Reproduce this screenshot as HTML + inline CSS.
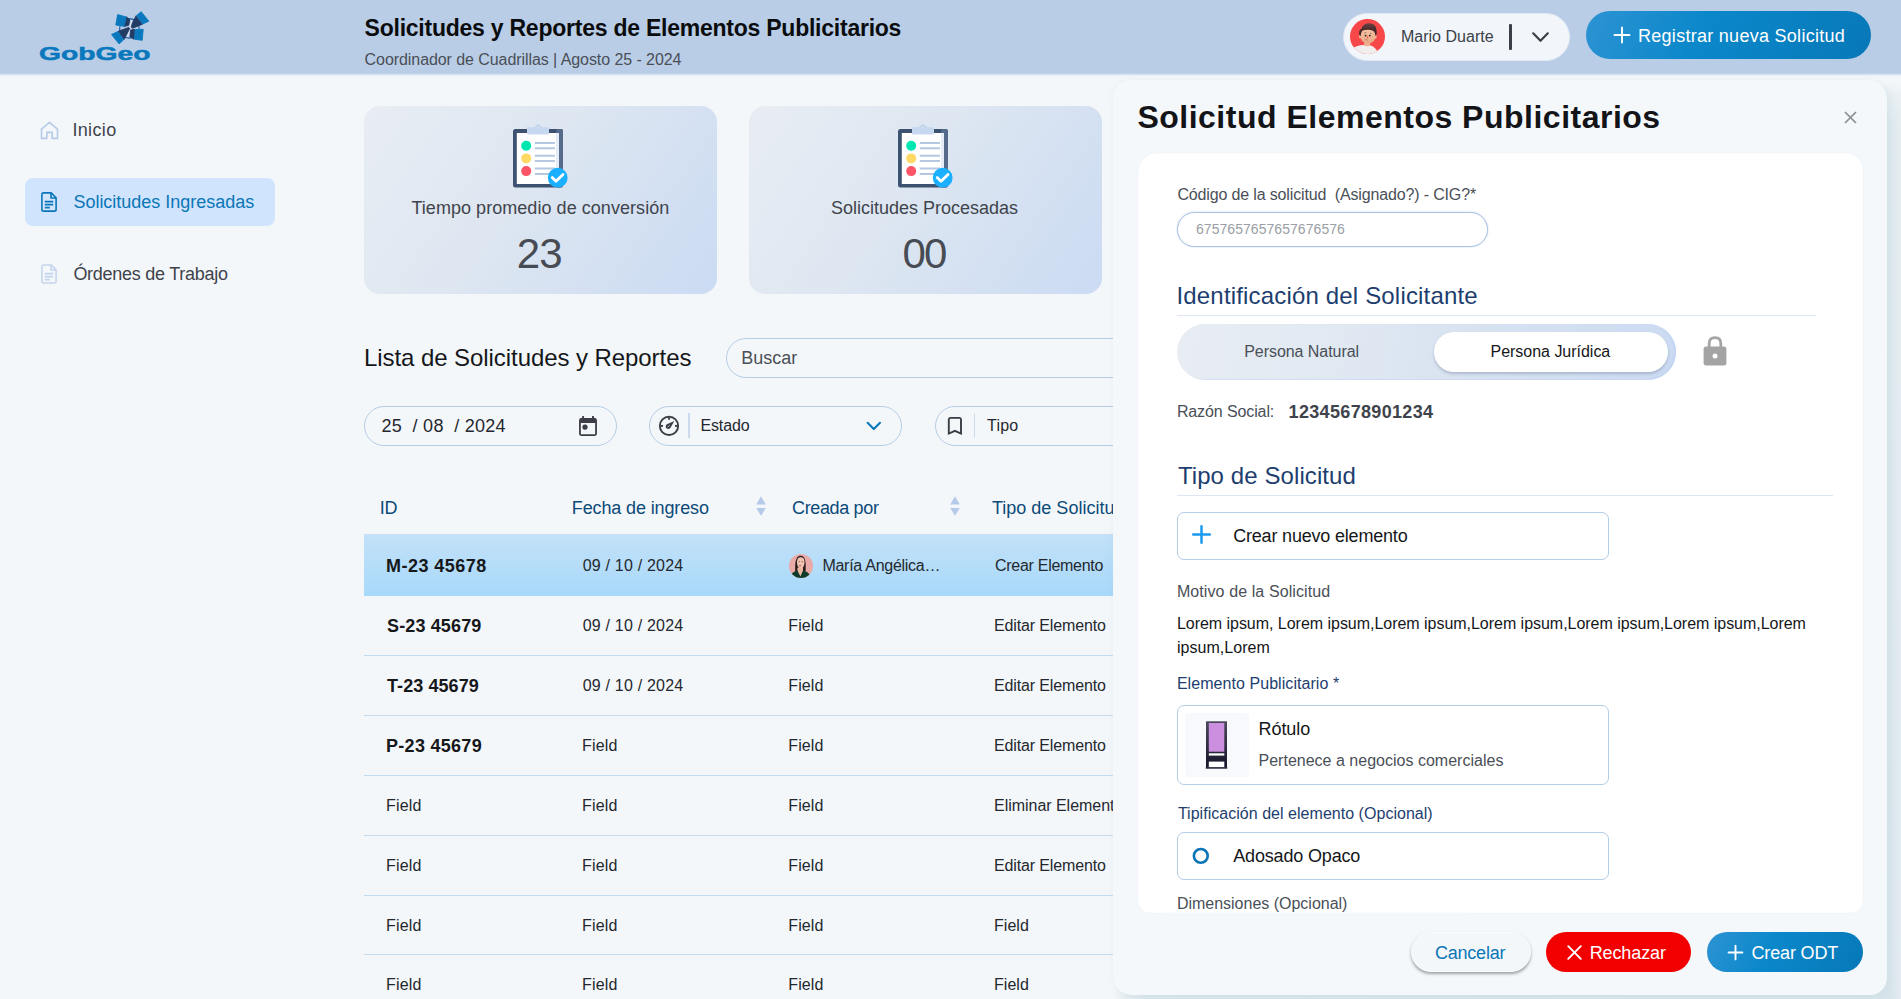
<!DOCTYPE html>
<html lang="es">
<head>
<meta charset="utf-8">
<title>Solicitudes y Reportes de Elementos Publicitarios</title>
<style>
*{box-sizing:border-box;margin:0;padding:0}
html,body{width:1901px;height:999px;overflow:hidden}
body{background:#f4f7fa;font-family:"Liberation Sans",sans-serif;color:#1f2328;position:relative}
.abs{position:absolute;white-space:nowrap}
svg{position:absolute;overflow:visible}
/* header */
#hdr{left:0;top:0;width:1901px;height:76px;background:linear-gradient(180deg,#b9cde6 0,#b9cde6 73.2px,#d9e4f0 74.6px,#f4f7fa 76px)}
#title{left:365px;top:14px;font-size:23px;font-weight:700;color:#0b0c0e;line-height:28px}
#sub{left:365px;top:50.8px;font-size:16px;color:#4a4f57;line-height:18px}
#user{left:1342.5px;top:12.5px;width:227px;height:48px;border-radius:24px;background:#f2f6fa;border:1.5px solid #dfe8f4}
#uavatar{left:1349.9px;top:18.9px;width:35.5px;height:35.5px;border-radius:50%;background:#f84748;overflow:hidden}
#uname{left:1401.5px;top:26.8px;font-size:16px;color:#3b4048;line-height:20px}
#usep{left:1509.2px;top:24px;width:2.4px;height:25.5px;background:#3b4048;border-radius:1px}
#reg{left:1586px;top:11px;width:284.5px;height:47.5px;border-radius:24px;background:linear-gradient(115deg,#2d93d3 0%,#0b88ca 40%,#0778b8 100%)}
#regt{left:1638px;top:24.5px;font-size:18px;color:#fff;line-height:22px}
/* sidebar */
.nav{font-size:18px;color:#3e434b;line-height:22px}
#navact{left:25px;top:178px;width:250px;height:47.5px;border-radius:8px;background:#d0e5fd}
/* cards */
.card{width:353px;height:188px;border-radius:16px;background:linear-gradient(125deg,#e8edf3 0%,#dde6f1 45%,#cbdbf3 100%)}
.clab{font-size:18px;color:#3f444c;line-height:22px}
.cnum{font-size:42px;color:#474c54;line-height:44px;margin-top:-0.3px}
/* list */
#ltitle{left:364px;top:344px;font-size:24px;color:#15171a;line-height:28px}
.pill{height:40px;border-radius:20px;border:1px solid #b5cde6;background:#f4f7fa}
.ptxt{font-size:16px;color:#24282e;line-height:20px}
.vdiv{width:1.8px;height:25px;background:#cddaee;top:413.2px}
.th{font-size:18px;color:#0b4a78;line-height:22px;top:497px}
.row{left:364px;width:749px;height:60px;border-bottom:1px solid #c5dcef;overflow:hidden}
.c1,.c2,.c3,.c4{position:absolute;white-space:nowrap;font-size:16px;color:#24282e;line-height:20px;top:20px}
.c1{left:23px}.c2{left:219px}.c3{left:425px}.c4{left:631px}
.b{font-weight:700;font-size:18px;color:#16181b;top:19.8px}
/* panel */
#pright{left:1876px;top:82px;width:25px;height:917px;background:linear-gradient(90deg,rgba(244,247,250,0) 0,rgba(244,247,250,0) 50%,rgba(244,247,250,.4) 100%),linear-gradient(180deg,#f4f7fa 0,#e6eef2 12px,#dbe7ec 40px,#d7e4ea 100%)}
#pbot{left:1113px;top:980px;width:764px;height:19px;background:linear-gradient(90deg,#f4f7fa 0,#e3ecf1 14px,#d9e5eb 34px,#d7e4ea 100%)}
#panel{left:1113px;top:80px;width:774px;height:914.5px;border-radius:19px 19px 17px 19px;background:#f5f8fb;box-shadow:0 0 9px rgba(120,170,190,.11)}
#ptitle{left:1138px;top:98.1px;font-size:32px;font-weight:700;color:#131418;line-height:38px}
#inner{left:1137.8px;top:153.3px;width:725px;height:760px;border-radius:19px 17px 12px 12px;background:#fff;box-shadow:inset 0 0 2px 0 #f0f3f6,0 0 2px 0 rgba(238,241,245,.9)}
.lab{font-size:16px;color:#4a4f57;line-height:20px}
.labb{font-size:16px;color:#1d3e6e;line-height:20px}
.sec{font-size:24px;color:#1d3e6e;line-height:28px}
.hr{height:1px;background:#e0e7f4}
.box{border:1px solid #b5cde6;border-radius:7px;background:#fff;left:1177px;width:431.5px}
.btxt{font-size:18px;color:#15171a;line-height:22px}
.btn{height:39.5px;border-radius:20px;top:932px}
.btnt{font-size:18px;color:#fff;line-height:22px;top:941.5px}
/*FIT*/
#title{left:364.6px !important;letter-spacing:-0.24px}
#sub{left:364.6px !important;letter-spacing:-0.07px}
#uname{left:1400.9px !important;letter-spacing:0.03px}
#regt{left:1638.0px !important;letter-spacing:0.28px}
#nav1{left:72.4px !important;letter-spacing:0.36px}
#nav2{left:73.4px !important;letter-spacing:-0.01px}
#nav3{left:73.4px !important;letter-spacing:-0.27px}
#cl1{left:411.4px !important;letter-spacing:0.05px}
#cn1{left:516.8px !important;letter-spacing:-0.86px}
#cl2{left:831.0px !important;letter-spacing:-0.00px}
#cn2{left:902.4px !important;letter-spacing:-1.76px}
#ltitle{left:364.0px !important;letter-spacing:-0.07px}
#searcht{left:741.3px !important;letter-spacing:-0.03px}
#datet{left:381.6px !important;letter-spacing:0.25px}
#estadot{left:700.4px !important;letter-spacing:-0.10px}
#tipot{left:987.0px !important;letter-spacing:0.22px}
#th1{left:379.7px !important;letter-spacing:-0.30px}
#th2{left:571.8px !important;letter-spacing:-0.13px}
#th3{left:792.0px !important;letter-spacing:-0.35px}
#ptitle{left:1137.4px !important;letter-spacing:0.50px}
#p1{left:1177.4px !important;letter-spacing:-0.15px}
#p2{left:1196.0px !important;letter-spacing:0.05px}
#p3{left:1176.5px !important;letter-spacing:0.17px}
#p4{left:1244.2px !important;letter-spacing:-0.05px}
#p5{left:1490.5px !important;letter-spacing:-0.02px}
#p6{left:1176.9px !important;letter-spacing:-0.11px}
#p7{left:1288.6px !important;letter-spacing:0.33px}
#p8{left:1177.9px !important;letter-spacing:0.09px}
#p9{left:1233.2px !important;letter-spacing:-0.19px}
#p10{left:1176.9px !important;letter-spacing:0.10px}
#p11{left:1176.9px !important;letter-spacing:-0.03px}
#p12{left:1176.9px !important;letter-spacing:0.04px}
#p13{left:1176.9px !important;letter-spacing:0.06px}
#p14{left:1258.5px !important;letter-spacing:-0.06px}
#p15{left:1258.5px !important;letter-spacing:0.01px}
#p16{left:1177.9px !important;letter-spacing:0.03px}
#p17{left:1233.2px !important;letter-spacing:-0.16px}
#p18{left:1176.9px !important;letter-spacing:-0.01px}
#bc{left:1435.0px !important;letter-spacing:-0.23px}
#br{left:1589.7px !important;letter-spacing:-0.11px}
#bo{left:1751.5px !important;letter-spacing:-0.15px}
#r1c1{left:22.0px !important;letter-spacing:0.47px}
#r1c2{left:218.7px !important;letter-spacing:0.20px}
#r1c3{left:458.4px !important;letter-spacing:-0.27px}
#r1c4{left:631.0px !important;letter-spacing:-0.28px}
#r2c1{left:23.0px !important;letter-spacing:0.14px}
#r2c2{left:218.7px !important;letter-spacing:0.20px}
#r2c3{left:424.3px !important;letter-spacing:0.10px}
#r2c4{left:630.0px !important;letter-spacing:-0.14px}
#r3c1{left:23.0px !important;letter-spacing:0.08px}
#r3c2{left:218.7px !important;letter-spacing:0.20px}
#r3c3{left:424.3px !important;letter-spacing:0.10px}
#r3c4{left:630.0px !important;letter-spacing:-0.14px}
#r4c1{left:22.0px !important;letter-spacing:0.29px}
#r4c2{left:218.1px !important;letter-spacing:0.13px}
#r4c3{left:424.3px !important;letter-spacing:0.10px}
#r4c4{left:630.0px !important;letter-spacing:-0.14px}
#r5c1{left:22.0px !important;letter-spacing:0.20px}
#r5c2{left:218.1px !important;letter-spacing:0.13px}
#r5c3{left:424.3px !important;letter-spacing:0.10px}
#r5c4{left:630.0px !important;letter-spacing:-0.03px}
#r6c1{left:22.0px !important;letter-spacing:0.20px}
#r6c2{left:218.1px !important;letter-spacing:0.13px}
#r6c3{left:424.3px !important;letter-spacing:0.10px}
#r6c4{left:630.0px !important;letter-spacing:-0.14px}
#r7c1{left:22.0px !important;letter-spacing:0.20px}
#r7c2{left:218.1px !important;letter-spacing:0.13px}
#r7c3{left:424.3px !important;letter-spacing:0.10px}
#r7c4{left:630.0px !important;letter-spacing:0.03px}
#r8c1{left:22.0px !important;letter-spacing:0.20px}
#r8c2{left:218.1px !important;letter-spacing:0.13px}
#r8c3{left:424.3px !important;letter-spacing:0.10px}
#r8c4{left:630.0px !important;letter-spacing:0.03px}
/*ENDFIT*/
</style>
</head>
<body>
<!-- HEADER -->
<div id="hdr" class="abs"></div>
<svg id="logo" style="left:0;top:0" width="200" height="74" viewBox="0 0 200 74">
  <circle cx="129.4" cy="28.4" r="9.8" fill="none" stroke="#1b5dab" stroke-width="1.15"/>
  <polygon points="131.3,20.4 132.5,21.2 128.1,36.9 126.8,36.4" fill="#e3ebf5"/>
  <g stroke-linejoin="round" stroke-width=".9">
  <polygon points="126.3,16.8 129.8,19.5 128.7,25.3 124.2,26.5" fill="#223c66" stroke="#223c66"/>
  <polygon points="136.1,15.8 142.6,24.2 132.5,28.3 131.2,26.7 132.6,22.4" fill="#223c66" stroke="#223c66"/>
  <polygon points="118.1,31.3 128.8,27.4 129.7,28.6 124.1,39.5" fill="#223c66" stroke="#223c66"/>
  <polygon points="130.7,30 135,29.4 133.9,39.2 129.9,36.7" fill="#223c66" stroke="#223c66"/>
  <polygon points="117.6,14.6 126.1,16.9 124,26.3 115.8,25" fill="#0a78bd" stroke="#0a78bd"/>
  <polygon points="141.2,11.7 148.8,21.2 142.8,23.9 136.5,15.6" fill="#0a78bd" stroke="#0a78bd"/>
  <polygon points="111.5,34.5 117.8,31.6 123.6,39.8 119.1,43.9" fill="#0a78bd" stroke="#0a78bd"/>
  <polygon points="135.4,29.5 143.2,29.3 142.2,40.3 134.4,39.2" fill="#0a78bd" stroke="#0a78bd"/>
  </g>
  <text x="39" y="60.4" font-family="Liberation Sans, sans-serif" font-weight="700" font-size="19" fill="#0a78bd" stroke="#0a78bd" stroke-width="0.5" textLength="111.5" lengthAdjust="spacingAndGlyphs">GobGeo</text>
</svg>
<div id="title" class="abs">Solicitudes y Reportes de Elementos Publicitarios</div>
<div id="sub" class="abs">Coordinador de Cuadrillas | Agosto 25 - 2024</div>
<div id="user" class="abs"></div>
<div id="uavatar" class="abs">
  <svg style="left:0;top:0" width="36" height="36" viewBox="0 0 36 36">
    <defs><linearGradient id="hg" x1="0" y1="0" x2="0" y2="1"><stop offset="0" stop-color="#6b4242"/><stop offset=".5" stop-color="#4a2a2b"/><stop offset="1" stop-color="#3c2022"/></linearGradient>
    <linearGradient id="sk" x1="0" y1="0" x2="0" y2="1"><stop offset="0" stop-color="#f6c4a4"/><stop offset="1" stop-color="#e8a585"/></linearGradient></defs>
    <path d="M2.5 29.5 C5 27.2 9.5 26.2 14 26 L20.6 26.4 C24 27.4 26.6 30.2 28 33.6 L24 38 H6 Z" fill="#f1eeed"/>
    <path d="M14.2 22 H20.2 V26.6 Q17.2 28.2 14.2 26.4 Z" fill="#eeb091"/>
    <ellipse cx="10.3" cy="17.6" rx="1.3" ry="1.9" fill="#efb494"/><ellipse cx="25.4" cy="17.8" rx="1.3" ry="1.9" fill="#efb494"/>
    <path d="M10.6 12 Q10.4 10.4 17.8 10.2 Q25.6 10.4 25.4 13 V18 Q25 22.6 21 24 Q17.6 25 14.2 23.6 Q10.8 21.8 10.6 17.6 Z" fill="url(#sk)"/>
    <path d="M9.4 16.2 C8.6 12.8 9.6 10.4 11.6 9.6 C12.4 6 16 4 19.6 4.2 C24 4.4 26.8 7.6 26.4 11 C27.2 13.2 26.8 15.4 25.6 17 C25.2 15 24.8 13.2 23.4 12 C20.4 10.6 15.4 10.4 12.4 11.8 C11.2 13 11 14.8 10.6 17 Z" fill="url(#hg)"/>
    <circle cx="15.6" cy="16.6" r=".9" fill="#2a1b1b"/><circle cx="19.8" cy="16.6" r=".9" fill="#2a1b1b"/>
    <path d="M14.4 13.9 l1.8 -.3 M19.9 14 l1.6 .6" stroke="#5a3a38" stroke-width=".6" fill="none"/>
    <path d="M17.3 16.2 L18.3 19 L16.9 19.2 Z" fill="#f25046"/>
    <path d="M15.3 19.8 q.8 1.3 2.1 1.2" stroke="#7a4438" stroke-width=".55" fill="none"/>
  </svg>
</div>
<div id="uname" class="abs">Mario Duarte</div>
<div id="usep" class="abs"></div>
<svg style="left:1532px;top:32px" width="17" height="11" viewBox="0 0 17 11"><path d="M1.2 1.3 L8.5 8.8 L15.8 1.3" fill="none" stroke="#3b4048" stroke-width="2.2" stroke-linecap="round" stroke-linejoin="round"/></svg>
<div id="reg" class="abs"></div>
<svg style="left:1614.2px;top:27px" width="16" height="16" viewBox="0 0 16 16"><path d="M8 0.5V15.5M0.5 8H15.5" stroke="#fff" stroke-width="1.9" stroke-linecap="round"/></svg>
<div id="regt" class="abs">Registrar nueva Solicitud</div>

<!-- SIDEBAR -->
<div id="navact" class="abs"></div>
<svg style="left:40px;top:120.5px" width="19" height="19" viewBox="0 0 19 19"><path d="M1.5 8.2 L9.5 1.4 L17.5 8.2 V17.4 H12.2 V11.4 H6.8 V17.4 H1.5 Z" fill="none" stroke="#b3cae8" stroke-width="1.6" stroke-linejoin="round"/></svg>
<svg style="left:41px;top:192px" width="16" height="20" viewBox="0 0 16 20"><path d="M2.6 0.9 H10.2 L15.1 5.8 V17.4 Q15.1 19.1 13.4 19.1 H2.6 Q0.9 19.1 0.9 17.4 V2.6 Q0.9 0.9 2.6 0.9 Z M10 1.2 V6 H14.8" fill="none" stroke="#0a76b7" stroke-width="1.6" stroke-linejoin="round"/><path d="M3.8 9.6 H12.2 M3.8 12.6 H12.2 M3.8 15.6 H8.8" stroke="#0a76b7" stroke-width="1.8"/></svg>
<svg style="left:41px;top:264px" width="16" height="20" viewBox="0 0 16 20"><path d="M2.6 0.9 H10.2 L15.1 5.8 V17.4 Q15.1 19.1 13.4 19.1 H2.6 Q0.9 19.1 0.9 17.4 V2.6 Q0.9 0.9 2.6 0.9 Z M10 1.2 V6 H14.8" fill="none" stroke="#c3d4ec" stroke-width="1.5" stroke-linejoin="round"/><path d="M3.8 9.6 H12.2 M3.8 12.6 H12.2 M3.8 15.6 H8.8" stroke="#c3d4ec" stroke-width="1.8"/></svg>
<div id="nav1" class="abs nav" style="left:73px;top:119px">Inicio</div>
<div id="nav2" class="abs nav" style="left:73px;top:191px;color:#0a76b7">Solicitudes Ingresadas</div>
<div id="nav3" class="abs nav" style="left:73px;top:263px">Órdenes de Trabajo</div>

<!-- CARDS -->
<div id="card1" class="abs card" style="left:364px;top:106px"></div>
<div id="card2" class="abs card" style="left:749px;top:106px"></div>
<svg style="left:513px;top:124px" width="62" height="66" viewBox="0 0 62 66"><g>
  <rect x="0" y="5" width="50" height="58.5" rx="2.5" fill="#3d5170"/>
  <rect x="43" y="5" width="7" height="58.5" rx="2" fill="#566a8a"/>
  <rect x="3.8" y="9" width="42.2" height="51" fill="#ffffff"/>
  <rect x="43" y="9" width="3" height="51" fill="#e6edf8"/>
  <path d="M14 3.2 H20.5 L24.3 0 H25.7 L29.5 3.2 H36 V9.2 Q36 10.6 34.6 10.6 H15.4 Q14 10.6 14 9.2 Z" fill="#c5d8f0"/>
  <circle cx="25" cy="4" r="1.3" fill="#f4f7fb" stroke="#a9bedb" stroke-width=".5"/>
  <circle cx="13.2" cy="21.8" r="5" fill="#00e6b0"/>
  <circle cx="13.2" cy="34.4" r="5" fill="#ffd966"/>
  <circle cx="13.2" cy="47.1" r="5" fill="#ff5566"/>
  <path d="M21.8 18.9 H42 M21.8 24.3 H42 M21.8 31.7 H42 M21.8 37.1 H42 M21.8 44.6 H42 M21.8 50 H42" stroke="#b5c8e3" stroke-width="2"/>
  <circle cx="44.7" cy="53.7" r="9.9" fill="#1ab0ff"/>
  <path d="M39.2 53.6 L43 57.2 L50 50.4" fill="none" stroke="#fff" stroke-width="2.8" stroke-linecap="round" stroke-linejoin="round"/>
</g></svg>
<svg style="left:898px;top:124px" width="62" height="66" viewBox="0 0 62 66"><g>
  <rect x="0" y="5" width="50" height="58.5" rx="2.5" fill="#3d5170"/>
  <rect x="43" y="5" width="7" height="58.5" rx="2" fill="#566a8a"/>
  <rect x="3.8" y="9" width="42.2" height="51" fill="#ffffff"/>
  <rect x="43" y="9" width="3" height="51" fill="#e6edf8"/>
  <path d="M14 3.2 H20.5 L24.3 0 H25.7 L29.5 3.2 H36 V9.2 Q36 10.6 34.6 10.6 H15.4 Q14 10.6 14 9.2 Z" fill="#c5d8f0"/>
  <circle cx="25" cy="4" r="1.3" fill="#f4f7fb" stroke="#a9bedb" stroke-width=".5"/>
  <circle cx="13.2" cy="21.8" r="5" fill="#00e6b0"/>
  <circle cx="13.2" cy="34.4" r="5" fill="#ffd966"/>
  <circle cx="13.2" cy="47.1" r="5" fill="#ff5566"/>
  <path d="M21.8 18.9 H42 M21.8 24.3 H42 M21.8 31.7 H42 M21.8 37.1 H42 M21.8 44.6 H42 M21.8 50 H42" stroke="#b5c8e3" stroke-width="2"/>
  <circle cx="44.7" cy="53.7" r="9.9" fill="#1ab0ff"/>
  <path d="M39.2 53.6 L43 57.2 L50 50.4" fill="none" stroke="#fff" stroke-width="2.8" stroke-linecap="round" stroke-linejoin="round"/>
</g></svg>
<div id="cl1" class="abs clab" style="left:411.5px;top:197px">Tiempo promedio de conversión</div>
<div id="cn1" class="abs cnum" style="left:518px;top:232px">23</div>
<div id="cl2" class="abs clab" style="left:831px;top:197px">Solicitudes Procesadas</div>
<div id="cn2" class="abs cnum" style="left:902px;top:232px">00</div>

<!-- LIST -->
<div id="ltitle" class="abs">Lista de Solicitudes y Reportes</div>
<div id="search" class="abs pill" style="left:726px;top:338px;width:420px"></div>
<div id="searcht" class="abs ptxt" style="left:742px;top:348px;color:#4a4f57;font-size:18px">Buscar</div>
<div id="date" class="abs pill" style="left:364px;top:406px;width:253px"></div>
<div id="datet" class="abs ptxt" style="left:381.5px;top:416px;font-size:18px">25&nbsp; / 08&nbsp; / 2024</div>
<svg style="left:579px;top:415.8px" width="18" height="20.2" viewBox="0 0 18 20.2"><path d="M2.2 2.05 H15.8 Q17.95 2.05 17.95 4.2 V17.85 Q17.95 20 15.8 20 H2.2 Q0.05 20 0.05 17.85 V4.2 Q0.05 2.05 2.2 2.05 Z M1.85 7 V18.2 H16.15 V7 Z" fill="#3c3d47" fill-rule="evenodd"/><rect x="3.1" y="0.1" width="1.95" height="3" fill="#3c3d47"/><rect x="13" y="0.1" width="2.05" height="3" fill="#3c3d47"/><rect x="3.4" y="8.5" width="5.2" height="5.2" rx="2.3" fill="#3c3d47"/></svg>
<div id="estado" class="abs pill" style="left:649px;top:406px;width:253px"></div>
<svg style="left:658px;top:415px" width="22" height="22" viewBox="0 0 22 22"><circle cx="11" cy="10.9" r="9.15" fill="none" stroke="#3a3d45" stroke-width="1.9"/><rect x="10.05" y="2.8" width="1.9" height="1.9" fill="#3a3d45"/><rect x="2.8" y="9.95" width="2.2" height="1.9" fill="#3a3d45"/><rect x="17" y="9.95" width="2.2" height="1.9" fill="#3a3d45"/><path d="M16.3 5.9 L12.55 12.8 A2.6 2.6 0 1 1 8.9 9.3 Z" fill="#3a3d45"/><path d="M10 11.9 L11.3 10.5" stroke="#eef2f7" stroke-width=".7" stroke-linecap="round"/></svg>
<div class="abs vdiv" style="left:688.2px"></div>
<div id="estadot" class="abs ptxt" style="left:701px;top:416.4px">Estado</div>
<svg style="left:866px;top:421px" width="16" height="10" viewBox="0 0 16 10"><path d="M1.6 1.8 L7.8 8 L14 1.8" fill="none" stroke="#0a76b7" stroke-width="2" stroke-linecap="round" stroke-linejoin="round"/></svg>
<div id="tipo" class="abs pill" style="left:935px;top:406px;width:253px"></div>
<svg style="left:947px;top:416px" width="16" height="20" viewBox="0 0 16 20"><path d="M1.8 17.5 V3.4 Q1.8 1.85 3.3 1.85 H12.5 Q14 1.85 14 3.4 V17.5 L7.9 14.8 Z" fill="none" stroke="#3a3d45" stroke-width="1.9" stroke-linejoin="miter"/></svg>
<div class="abs vdiv" style="left:974px;width:1.3px;background:#cfdcef"></div>
<div id="tipot" class="abs ptxt" style="left:987px;top:416.4px">Tipo</div>

<div id="th1" class="abs th" style="left:381px">ID</div>
<div id="th2" class="abs th" style="left:573px">Fecha de ingreso</div>
<svg style="left:755.5px;top:496px" width="10" height="20" viewBox="0 0 10 20"><path d="M5 0.3 L9.8 8.6 H0.2 Z M5 19.8 L9.8 12.1 H0.2 Z" fill="#b5cae8"/></svg>
<div id="th3" class="abs th" style="left:792px">Creada por</div>
<svg style="left:949.5px;top:496px" width="10" height="20" viewBox="0 0 10 20"><path d="M5 0.3 L9.8 8.6 H0.2 Z M5 19.8 L9.8 12.1 H0.2 Z" fill="#b5cae8"/></svg>
<div id="th4" class="abs th" style="left:992px">Tipo de Solicitud</div>

<div id="r1" class="abs row" style="top:534px;height:62px;background:linear-gradient(180deg,#c8dbf3 0,#c3e1f8 1.5px,#b5ddf9 50%,#a8d9fa 100%);border-bottom:0">
  <span id="r1c1" class="c1 b" style="top:21.8px">M-23 45678</span><span id="r1c2" class="c2" style="top:22px">09 / 10 / 2024</span><span id="r1c3" class="c3" style="left:459px;top:22px">María Angélica…</span><span id="r1c4" class="c4" style="top:22px">Crear Elemento</span>
  <svg style="left:425px;top:20px" width="24" height="24" viewBox="0 0 24 24"><defs><clipPath id="avc"><circle cx="12" cy="12" r="12"/></clipPath></defs><g clip-path="url(#avc)"><rect width="24" height="24" fill="#eaaaa8"/><path d="M6.2 17.5 C5.8 9 6.6 1.8 11.6 1.8 C16.8 1.8 17 9 16.6 17.5 Z" fill="#2c1b1d"/><path d="M8 8.2 C8 4.6 9.6 3.3 11.7 3.3 C13.9 3.3 15.5 4.6 15.5 8.2 C15.5 11.8 13.8 14.7 11.7 14.7 C9.7 14.7 8 11.8 8 8.2 Z" fill="#f0c2b0"/><ellipse cx="11" cy="11.8" rx="1.2" ry=".8" fill="#d9606a"/><path d="M9.6 7.6 h1.3 M12.6 7.6 h1.3" stroke="#6a4440" stroke-width=".7"/><path d="M8.4 13.8 L14 13.8 L14 18 L11.4 22.4 L8.4 18 Z" fill="#e9b9a2"/><path d="M1.6 24 C1.8 19.6 4.6 17.6 8.4 16.6 L11.4 22.4 L14 16.6 C17.8 17.6 21.4 19.6 21.8 24 Z" fill="#0f3b2b"/></g></svg>
</div>
<div id="r2" class="abs row" style="top:596px"><span id="r2c1" class="c1 b">S-23 45679</span><span id="r2c2" class="c2">09 / 10 / 2024</span><span id="r2c3" class="c3">Field</span><span id="r2c4" class="c4">Editar Elemento</span></div>
<div id="r3" class="abs row" style="top:656px"><span id="r3c1" class="c1 b">T-23 45679</span><span id="r3c2" class="c2">09 / 10 / 2024</span><span id="r3c3" class="c3">Field</span><span id="r3c4" class="c4">Editar Elemento</span></div>
<div id="r4" class="abs row" style="top:716px"><span id="r4c1" class="c1 b">P-23 45679</span><span id="r4c2" class="c2">Field</span><span id="r4c3" class="c3">Field</span><span id="r4c4" class="c4">Editar Elemento</span></div>
<div id="r5" class="abs row" style="top:776px"><span id="r5c1" class="c1">Field</span><span id="r5c2" class="c2">Field</span><span id="r5c3" class="c3">Field</span><span id="r5c4" class="c4">Eliminar Elemento</span></div>
<div id="r6" class="abs row" style="top:836px"><span id="r6c1" class="c1">Field</span><span id="r6c2" class="c2">Field</span><span id="r6c3" class="c3">Field</span><span id="r6c4" class="c4">Editar Elemento</span></div>
<div id="r7" class="abs row" style="top:896px;height:59px"><span id="r7c1" class="c1">Field</span><span id="r7c2" class="c2">Field</span><span id="r7c3" class="c3">Field</span><span id="r7c4" class="c4">Field</span></div>
<div id="r8" class="abs row" style="top:955px;border-bottom:0"><span id="r8c1" class="c1">Field</span><span id="r8c2" class="c2">Field</span><span id="r8c3" class="c3">Field</span><span id="r8c4" class="c4">Field</span></div>

<!-- PANEL -->
<div id="pright" class="abs"></div>
<div id="pbot" class="abs"></div>
<div id="panel" class="abs"></div>
<div id="ptitle" class="abs">Solicitud Elementos Publicitarios</div>
<svg style="left:1844px;top:111px" width="13" height="13" viewBox="0 0 13 13"><path d="M1 1 L12 12 M12 1 L1 12" stroke="#8a8d93" stroke-width="1.75"/></svg>
<div id="inner" class="abs"></div>

<div id="p1" class="abs lab" style="left:1177px;top:184.8px">Código de la solicitud&nbsp; (Asignado?) - CIG?*</div>
<div id="pinput" class="abs" style="left:1176.5px;top:211.5px;width:311px;height:35px;border-radius:18px;border:1.9px solid #a8c3e4;background:#fff;box-shadow:0 0 2px rgba(150,180,220,.55)"></div>
<div id="p2" class="abs" style="left:1196px;top:221px;font-size:14px;line-height:16px;color:#9a9ea5">6757657657657676576</div>

<div id="p3" class="abs sec" style="left:1177px;top:282px">Identificación del Solicitante</div>
<div class="abs hr" style="left:1177px;top:315px;width:639px"></div>
<div id="toggle" class="abs" style="left:1177px;top:324px;width:498.5px;height:56px;border-radius:28px;background:linear-gradient(97deg,#e8edf3 0%,#e1e9f2 30%,#d7e2f1 62%,#ccdbf2 100%);box-shadow:inset -2.5px -.5px 1.5px #c4d5f3"></div>
<div id="togon" class="abs" style="left:1434px;top:332px;width:234px;height:40px;border-radius:20px;background:#fff;box-shadow:0 2px 3px rgba(120,135,160,.45)"></div>
<div id="p4" class="abs" style="left:1244.5px;top:341.6px;font-size:16px;line-height:20px;color:#4a4f57">Persona Natural</div>
<div id="p5" class="abs" style="left:1491.5px;top:341.6px;font-size:16px;line-height:20px;color:#15171a">Persona Jurídica</div>
<svg style="left:1703px;top:336px" width="24" height="30" viewBox="0 0 24 30"><path d="M6.2 11 V7.4 Q6.2 1.6 12 1.6 Q17.8 1.6 17.8 7.4 V11" fill="none" stroke="#a4a4a4" stroke-width="2.8"/><rect x="0.6" y="10.4" width="22.8" height="19" rx="2.6" fill="#a4a4a4"/><circle cx="12" cy="20" r="2.5" fill="#fff"/></svg>

<div id="p6" class="abs lab" style="left:1177px;top:402px">Razón Social:</div>
<div id="p7" class="abs" style="left:1289.5px;top:401px;font-size:18px;font-weight:700;line-height:22px;color:#3f444c">12345678901234</div>

<div id="p8" class="abs sec" style="left:1177px;top:461.5px">Tipo de Solicitud</div>
<div class="abs hr" style="left:1177px;top:495px;width:656px"></div>
<div class="abs box" style="top:512px;height:47.5px"></div>
<svg style="left:1191.5px;top:525px" width="19" height="19" viewBox="0 0 19 19"><path d="M9.5 1.2 V17.8 M1.2 9.5 H17.8" stroke="#1a9af0" stroke-width="2.5" stroke-linecap="round"/></svg>
<div id="p9" class="abs btxt" style="left:1233px;top:525px">Crear nuevo elemento</div>

<div id="p10" class="abs lab" style="left:1177px;top:582px">Motivo de la Solicitud</div>
<div id="p11" class="abs" style="left:1177px;top:614px;font-size:16px;line-height:20px;color:#15171a">Lorem ipsum, Lorem ipsum,Lorem ipsum,Lorem ipsum,Lorem ipsum,Lorem ipsum,Lorem</div>
<div id="p12" class="abs" style="left:1177px;top:638px;font-size:16px;line-height:20px;color:#15171a">ipsum,Lorem</div>

<div id="p13" class="abs labb" style="left:1177px;top:674px">Elemento Publicitario *</div>
<div class="abs box" style="top:705px;height:80px"></div>
<div class="abs" style="left:1185px;top:713px;width:63.5px;height:63.5px;border-radius:4px;background:#f7f9fc"></div>
<svg style="left:1205px;top:721px" width="23" height="48" viewBox="0 0 23 48"><defs><linearGradient id="rg" x1="0" y1="0" x2="0" y2="1"><stop offset="0" stop-color="#4a4a5c"/><stop offset="1" stop-color="#14142a"/></linearGradient></defs><rect x="1" y="0.3" width="21" height="47.2" fill="url(#rg)"/><rect x="3.8" y="2" width="15.5" height="28.7" fill="#cc8fe0"/><rect x="3.8" y="32.3" width="15.5" height="2.3" fill="#fff"/><rect x="3.8" y="40.6" width="15.5" height="5.6" fill="#fff"/><rect x="0.6" y="46.3" width="21.8" height="1.2" fill="#3a3a4e"/></svg>
<div id="p14" class="abs btxt" style="left:1259.5px;top:718px">Rótulo</div>
<div id="p15" class="abs lab" style="left:1259.5px;top:750.5px">Pertenece a negocios comerciales</div>

<div id="p16" class="abs labb" style="left:1177px;top:803.5px">Tipificación del elemento (Opcional)</div>
<div class="abs box" style="top:832px;height:47.5px"></div>
<svg style="left:1192px;top:847px" width="18" height="18" viewBox="0 0 18 18"><circle cx="8.8" cy="8.9" r="6.9" fill="none" stroke="#0a76b7" stroke-width="2.6"/></svg>
<div id="p17" class="abs btxt" style="left:1233px;top:845px">Adosado Opaco</div>
<div id="p18" class="abs lab" style="left:1177px;top:893.5px">Dimensiones (Opcional)</div>
<div class="abs" style="left:1165px;top:912px;width:300px;height:10px;background:linear-gradient(180deg,rgba(245,248,251,0) 0,#f5f8fb 1.6px)"></div>

<!-- FOOTER BUTTONS -->
<div id="bcancel" class="abs btn" style="left:1411px;width:120px;background:#f4f7fa;border:1.5px solid #fbfcfe;box-shadow:0 2px 3px rgba(75,80,88,.5)"></div>
<div id="bc" class="abs" style="left:1435px;top:941.5px;font-size:18px;line-height:22px;color:#0a76b7">Cancelar</div>
<div id="brech" class="abs btn" style="left:1546px;width:145px;background:#f20000"></div>
<svg style="left:1566.5px;top:945px" width="15" height="15" viewBox="0 0 15 15"><path d="M1.2 1.2 L13.8 13.8 M13.8 1.2 L1.2 13.8" stroke="#fff" stroke-width="1.9" stroke-linecap="round"/></svg>
<div id="br" class="abs btnt" style="left:1590px">Rechazar</div>
<div id="bodt" class="abs btn" style="left:1707px;width:156px;background:linear-gradient(115deg,#2d93d3 0%,#0b88ca 40%,#0778b8 100%)"></div>
<svg style="left:1728px;top:945px" width="15" height="15" viewBox="0 0 15 15"><path d="M7.5 0.6 V14.4 M0.6 7.5 H14.4" stroke="#fff" stroke-width="1.9" stroke-linecap="round"/></svg>
<div id="bo" class="abs btnt" style="left:1751.5px">Crear ODT</div>

</body>
</html>
